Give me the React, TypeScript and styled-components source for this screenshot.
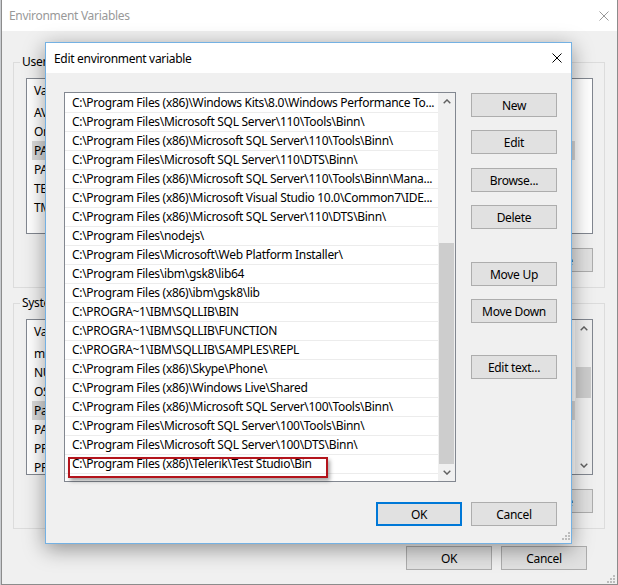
import styled, { createGlobalStyle } from "styled-components";

const GlobalStyle = createGlobalStyle`
  html, body {
    margin: 0;
    padding: 0;
  }
  body {
    background: #c9ccd0;
    font-family: "Segoe UI", "Noto Sans", "Liberation Sans", sans-serif;
    font-size: 12px;
    letter-spacing: -0.3px;
    color: #000;
  }
`;

const Screen = styled.div`
  position: relative;
  width: 618px;
  height: 585px;
  overflow: hidden;
`;

const Window = styled.div`
  position: relative;
  margin-left: 1px;
  width: 617px;
  height: 585px;
  box-sizing: border-box;
  border: 1px solid #8c8c8c;
  border-top: none;
  background: #f0f0f0;
  display: flex;
  flex-direction: column;
`;

const TitleBar = styled.div<{ $active?: boolean }>`
  flex: none;
  height: ${(p) => (p.$active ? 30 : 31)}px;
  background: #fff;
  display: flex;
  align-items: center;
  justify-content: space-between;
  padding: 0 ${(p) => (p.$active ? 9 : 8)}px 0 ${(p) => (p.$active ? 8 : 7)}px;
  color: ${(p) => (p.$active ? "#000" : "#999")};
`;

const WindowBody = styled.div`
  display: flex;
  flex-direction: column;
  padding: 0 12px 0 11px;
`;

const GroupBox = styled.fieldset<{ $top: number }>`
  margin: ${(p) => p.$top}px 0 0;
  border: 1px solid #dcdcdc;
  padding: 8px 11px 15px 12px;
  min-width: 0;
  display: flex;
  flex-direction: column;
`;

const Legend = styled.legend`
  padding: 0 2px;
  margin-left: -6px;
  line-height: 16px;
`;

const VarList = styled.div`
  height: 156px;
  box-sizing: border-box;
  border: 1px solid #828790;
  background: #fff;
  display: flex;
`;

const VarRows = styled.div`
  flex: 1;
  padding-left: 5px;
`;

const VarHeader = styled.div`
  height: 24px;
  line-height: 24px;
  padding-left: 2px;
  display: flex;
`;

const VarRow = styled.div<{ $selected?: boolean }>`
  height: 19px;
  line-height: 19px;
  padding-left: 2px;
  white-space: nowrap;
  background: ${(p) => (p.$selected ? "#d9d9d9" : "transparent")};
`;

const NameCol = styled.span`
  width: 160px;
`;

const ScrollGap = styled.div`
  width: 17px;
  flex: none;
`;

const ScrollBar = styled.div`
  width: 17px;
  flex: none;
  background: #f0f0f0;
  display: flex;
  flex-direction: column;
`;

const ScrollArrow = styled.div`
  height: 17px;
  flex: none;
  display: flex;
  align-items: center;
  justify-content: center;
`;

const ScrollTrack = styled.div`
  flex: 1;
  padding: 0 1px;
`;

const ScrollThumb = styled.div<{ $offset: number; $size: number }>`
  margin-top: ${(p) => p.$offset}px;
  height: ${(p) => p.$size}px;
  background: #cdcdcd;
`;

const ButtonRow = styled.div<{ $top: number; $gap: number; $right?: number }>`
  display: flex;
  justify-content: flex-end;
  gap: ${(p) => p.$gap}px;
  margin-top: ${(p) => p.$top}px;
  padding-right: ${(p) => p.$right ?? 0}px;
`;

const Button = styled.button<{ $width?: number; $default?: boolean; $top?: number }>`
  flex: none;
  box-sizing: border-box;
  width: ${(p) => p.$width ?? 86}px;
  height: 24px;
  margin: ${(p) => p.$top ?? 0}px 0 0;
  padding: 0;
  border: ${(p) => (p.$default ? "2px solid #0078d7" : "1px solid #adadad")};
  background: #e1e1e1;
  font: inherit;
  letter-spacing: inherit;
  color: #000;
`;

const Dialog = styled.div`
  position: absolute;
  left: 45px;
  top: 42px;
  width: 527px;
  height: 502px;
  box-sizing: border-box;
  border: 1px solid #74b1e3;
  background: #f0f0f0;
  box-shadow: 0 5px 20px rgba(0, 0, 0, 0.4);
  display: flex;
  flex-direction: column;
`;

const DialogBody = styled.div`
  display: grid;
  grid-template-columns: 392px 86px;
  column-gap: 15px;
  padding: 19px 14px 0 18px;
`;

const PathList = styled.div`
  position: relative;
  height: 390px;
  box-sizing: border-box;
  border: 1px solid #828790;
  background: #fff;
  display: flex;
`;

const PathRows = styled.div`
  flex: 1;
  min-width: 0;
  padding-top: 1px;
`;

const PathRow = styled.div`
  height: 18px;
  line-height: 18px;
  border-bottom: 1px solid #ececec;
  padding-left: 7px;
  white-space: nowrap;
  overflow: hidden;
`;

const Callout = styled.div`
  position: absolute;
  left: 3px;
  top: 364px;
  width: 260px;
  height: 21px;
  box-sizing: border-box;
  border: 2px solid #b3141c;
  box-shadow: 2px 3px 4px rgba(0, 0, 0, 0.35);
`;

const SideButtons = styled.div`
  display: flex;
  flex-direction: column;
  padding-top: 1px;
`;

const Grip = styled.div<{ $right: number; $bottom: number }>`
  position: absolute;
  right: ${(p) => p.$right}px;
  bottom: ${(p) => p.$bottom}px;
  line-height: 0;
`;

const Chevron = ({ down }: { down?: boolean }) => (
  <svg width="8" height="5" viewBox="0 0 8 5">
    <polyline
      points={down ? "0.7,0.8 4,4.1 7.3,0.8" : "0.7,4.2 4,0.9 7.3,4.2"}
      fill="none"
      stroke="#606060"
      strokeWidth="1.4"
    />
  </svg>
);

const CloseGlyph = () => (
  <svg width="10" height="10" viewBox="0 0 10 10">
    <path d="M0.5 0.5 L9.5 9.5 M9.5 0.5 L0.5 9.5" stroke="currentColor" strokeWidth="1" />
  </svg>
);

const GripDots = () => (
  <svg width="9" height="9" viewBox="0 0 9 9">
    {[
      [7, 1],
      [7, 4],
      [4, 4],
      [7, 7],
      [4, 7],
      [1, 7],
    ].map(([x, y]) => (
      <rect key={`${x}-${y}`} x={x} y={y} width="2" height="2" fill="#bcbcbc" />
    ))}
  </svg>
);

const userVars = ["AVR32_HOME", "OneDrive", "PATH", "PATHEXT", "TEMP", "TMP"];
const systemVars = [
  "m2_home",
  "NUMBER_OF_PROCESSORS",
  "OS",
  "Path",
  "PATHEXT",
  "PROCESSOR_ARCHITECTURE",
  "PROCESSOR_IDENTIFIER",
];

const paths = [
  "C:\\Program Files (x86)\\Windows Kits\\8.0\\Windows Performance To...",
  "C:\\Program Files\\Microsoft SQL Server\\110\\Tools\\Binn\\",
  "C:\\Program Files (x86)\\Microsoft SQL Server\\110\\Tools\\Binn\\",
  "C:\\Program Files\\Microsoft SQL Server\\110\\DTS\\Binn\\",
  "C:\\Program Files (x86)\\Microsoft SQL Server\\110\\Tools\\Binn\\Mana...",
  "C:\\Program Files (x86)\\Microsoft Visual Studio 10.0\\Common7\\IDE...",
  "C:\\Program Files (x86)\\Microsoft SQL Server\\110\\DTS\\Binn\\",
  "C:\\Program Files\\nodejs\\",
  "C:\\Program Files\\Microsoft\\Web Platform Installer\\",
  "C:\\Program Files\\ibm\\gsk8\\lib64",
  "C:\\Program Files (x86)\\ibm\\gsk8\\lib",
  "C:\\PROGRA~1\\IBM\\SQLLIB\\BIN",
  "C:\\PROGRA~1\\IBM\\SQLLIB\\FUNCTION",
  "C:\\PROGRA~1\\IBM\\SQLLIB\\SAMPLES\\REPL",
  "C:\\Program Files (x86)\\Skype\\Phone\\",
  "C:\\Program Files (x86)\\Windows Live\\Shared",
  "C:\\Program Files (x86)\\Microsoft SQL Server\\100\\Tools\\Binn\\",
  "C:\\Program Files\\Microsoft SQL Server\\100\\Tools\\Binn\\",
  "C:\\Program Files\\Microsoft SQL Server\\100\\DTS\\Binn\\",
  "C:\\Program Files (x86)\\Telerik\\Test Studio\\Bin",
];

const App = () => (
  <Screen>
    <GlobalStyle />
    <Window>
      <TitleBar>
        <span>Environment Variables</span>
        <CloseGlyph />
      </TitleBar>
      <WindowBody>
        <GroupBox $top={23}>
          <Legend>User variables for Admin</Legend>
          <VarList>
            <VarRows>
              <VarHeader>
                <NameCol>Variable</NameCol>
                <span>Value</span>
              </VarHeader>
              {userVars.map((v, i) => (
                <VarRow key={v} $selected={i === 2}>
                  {v}
                </VarRow>
              ))}
            </VarRows>
            <ScrollGap />
          </VarList>
          <ButtonRow $top={14} $gap={8}>
            <Button $width={75}>New...</Button>
            <Button $width={75}>Edit...</Button>
            <Button $width={75}>Delete</Button>
          </ButtonRow>
        </GroupBox>
        <GroupBox $top={7}>
          <Legend>System variables</Legend>
          <VarList>
            <VarRows>
              <VarHeader>
                <NameCol>Variable</NameCol>
                <span>Value</span>
              </VarHeader>
              {systemVars.map((v, i) => (
                <VarRow key={v + i} $selected={i === 3}>
                  {v}
                </VarRow>
              ))}
            </VarRows>
            <ScrollBar>
              <ScrollArrow>
                <Chevron />
              </ScrollArrow>
              <ScrollTrack>
                <ScrollThumb $offset={30} $size={31} />
              </ScrollTrack>
              <ScrollArrow>
                <Chevron down />
              </ScrollArrow>
            </ScrollBar>
          </VarList>
          <ButtonRow $top={14} $gap={8}>
            <Button $width={75}>New...</Button>
            <Button $width={75}>Edit...</Button>
            <Button $width={75}>Delete</Button>
          </ButtonRow>
        </GroupBox>
        <ButtonRow $top={17} $gap={9} $right={18}>
          <Button>OK</Button>
          <Button>Cancel</Button>
        </ButtonRow>
      </WindowBody>
      <Grip $right={2} $bottom={1}>
        <GripDots />
      </Grip>
    </Window>

    <Dialog>
      <TitleBar $active>
        <span>Edit environment variable</span>
        <CloseGlyph />
      </TitleBar>
      <DialogBody>
        <PathList>
          <PathRows>
            {paths.map((p) => (
              <PathRow key={p}>{p}</PathRow>
            ))}
          </PathRows>
          <ScrollBar>
            <ScrollArrow>
              <Chevron />
            </ScrollArrow>
            <ScrollTrack>
              <ScrollThumb $offset={133} $size={221} />
            </ScrollTrack>
            <ScrollArrow>
              <Chevron down />
            </ScrollArrow>
          </ScrollBar>
          <Callout />
        </PathList>
        <SideButtons>
          <Button>New</Button>
          <Button $top={13}>Edit</Button>
          <Button $top={14}>Browse...</Button>
          <Button $top={13}>Delete</Button>
          <Button $top={33}>Move Up</Button>
          <Button $top={13}>Move Down</Button>
          <Button $top={32}>Edit text...</Button>
        </SideButtons>
      </DialogBody>
      <ButtonRow $top={20} $gap={9} $right={14}>
        <Button $default>OK</Button>
        <Button>Cancel</Button>
      </ButtonRow>
      <Grip $right={1} $bottom={3}>
        <GripDots />
      </Grip>
    </Dialog>
  </Screen>
);

export default App;
